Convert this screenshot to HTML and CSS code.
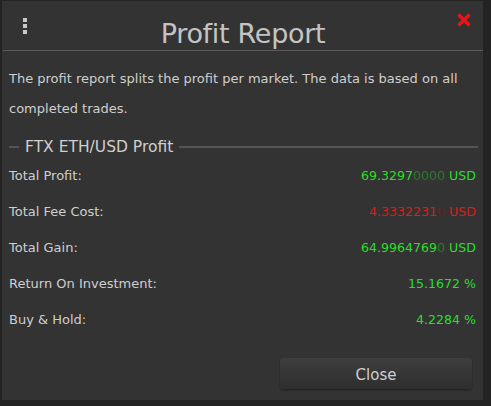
FILE: index.html
```html
<!DOCTYPE html>
<html>
<head>
<meta charset="utf-8">
<link rel="stylesheet" href="styles.css">
</head>
<body>
<div class="dialog">
  <div class="header">
    <div class="menu"><span></span><span></span><span></span></div>
    <h1 class="title">Profit Report</h1>
    <svg class="close-x" width="14" height="14" viewBox="0 0 14 14"><path d="M2.5 2.5 L11.5 11.5 M11.5 2.5 L2.5 11.5" stroke="#e8141a" stroke-width="3.4" stroke-linecap="round"/></svg>
  </div>
  <p class="intro">The profit report splits the profit per market. The data is based on all completed trades.</p>
  <fieldset class="group">
    <legend>FTX ETH/USD Profit</legend>
    <div class="row"><span class="label">Total Profit:</span><span class="val pos">69.3297<span class="dim">0000</span> USD</span></div>
    <div class="row"><span class="label">Total Fee Cost:</span><span class="val neg">4.3332231<span class="dim">0</span> USD</span></div>
    <div class="row"><span class="label">Total Gain:</span><span class="val pos">64.9964769<span class="dim">0</span> USD</span></div>
    <div class="row"><span class="label">Return On Investment:</span><span class="val pos">15.1672 %</span></div>
    <div class="row"><span class="label">Buy &amp; Hold:</span><span class="val pos">4.2284 %</span></div>
  </fieldset>
  <div class="footer"><button class="btn">Close</button></div>
</div>
</body>
</html>
```
FILE: styles.css
```css
html, body { margin: 0; padding: 0; }
body {
  background: #232323;
  width: 491px;
  height: 406px;
  overflow: hidden;
  font-family: "DejaVu Sans", sans-serif;
}
.dialog {
  margin: 1px 0 0 2px;
  width: 481px;
  height: 399px;
  background: #333333;
  display: flex;
  flex-direction: column;
  box-sizing: border-box;
}
.header {
  position: relative;
  height: 49px;
  border-bottom: 1px solid #5a5a5a;
  margin: 0 0 0 1px;
  display: flex;
  align-items: center;
  justify-content: center;
}
.title {
  margin: 16px 0 0 0;
  font-weight: normal;
  font-size: 27px;
  color: #c4c4c4;
  letter-spacing: -0.3px;
}
.menu {
  position: absolute;
  left: 20px;
  top: 17px;
  display: flex;
  flex-direction: column;
  gap: 2px;
}
.menu span {
  display: block;
  width: 4px;
  height: 4px;
  background: #c8c8c8;
}
.close-x {
  position: absolute;
  right: 12px;
  top: 12px;
}
.intro {
  margin: 13px 8px 0 7px;
  font-size: 13px;
  line-height: 30px;
  color: #cfcfcf;
}
.group {
  margin: 14px 5px 0 7px;
  padding: 0 2px 0 0;
  border: none;
  border-top: 2px solid #555;
}
.group legend {
  padding: 0 6px;
  margin-left: 10px;
  font-size: 15.5px;
  color: #cfcfcf;
}
.row {
  display: flex;
  justify-content: space-between;
  align-items: center;
  height: 36px;
  font-size: 13px;
}
.row:first-of-type { margin-top: 1px; }
.label { color: #cfcfcf; }
.val { font-size: 12.6px; }
.pos { color: #2adf2a; }
.pos .dim { color: #2b7a2b; }
.neg { color: #d42020; }
.neg .dim { color: #6a2020; }
.footer {
  margin-top: auto;
  display: flex;
  justify-content: flex-end;
  padding: 0 11px 11px 0;
}
.btn {
  width: 192px;
  height: 31px;
  padding: 3px 0 0 0;
  border: none;
  border-radius: 3px;
  background: linear-gradient(#3e3e3e, #2e2e2e);
  box-shadow: 0 1px 2px rgba(0,0,0,0.4);
  color: #cfcfcf;
  font-family: "DejaVu Sans", sans-serif;
  font-size: 15px;
}
```
